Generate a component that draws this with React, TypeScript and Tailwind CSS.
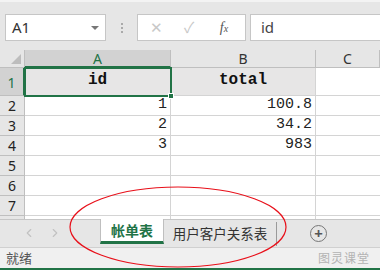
import { ChevronLeft, ChevronRight } from "lucide-react";

const cols = ["A", "B", "C"];
const rows: (string | number)[][] = [
  ["id", "total"],
  [1, "100.8"],
  [2, "34.2"],
  [3, "983"],
  ["", ""],
  ["", ""],
  ["", ""],
];

const mono = { fontFamily: '"Liberation Mono", "DejaVu Sans Mono", monospace' };
const ui = { fontFamily: '"Noto Sans", "Noto Sans CJK SC", sans-serif' };

export default function App() {
  return (
    <div className="relative w-[380px] h-[270px] overflow-hidden bg-[#e6e6e6] select-none" style={ui}>
      {/* formula bar */}
      <div className="h-[50px] flex items-start pt-[12px] border-t-2 border-[#f3f3f3]">
        <div className="ml-[5px] w-[101px] h-[27px] bg-white border border-[#c6c6c6] flex items-center justify-between pl-[6px] pr-[6px]">
          <span className="text-[15px] text-[#333]">A1</span>
          <span className="w-0 h-0 border-l-[4px] border-r-[4px] border-t-[4px] border-l-transparent border-r-transparent border-t-[#777]" />
        </div>
        <div className="w-[31px] h-[27px] flex flex-col items-center justify-center gap-[2px]">
          <span className="w-[2px] h-[2px] bg-[#aaa]" />
          <span className="w-[2px] h-[2px] bg-[#aaa]" />
          <span className="w-[2px] h-[2px] bg-[#aaa]" />
        </div>
        <div className="w-[109px] h-[27px] bg-white border border-[#c6c6c6] flex items-center">
          <span className="w-[36px] text-center text-[15px] text-[#c8c8c8]">✕</span>
          <span className="w-[30px] text-center text-[15px] text-[#c8c8c8]">✓</span>
          <span className="w-[40px] text-center text-[14px] italic text-[#555]" style={{ fontFamily: '"Liberation Serif", serif' }}>
            f<span className="text-[10px]">x</span>
          </span>
        </div>
        <div className="ml-[4px] flex-1 h-[27px] bg-white border border-[#c6c6c6] border-r-0 flex items-center pl-[10px]">
          <span className="text-[15px] text-[#444]">id</span>
        </div>
      </div>

      {/* grid */}
      <div className="grid grid-cols-[25px_146px_145px_64px] grid-rows-[18px_28px_repeat(6,20px)_10px] bg-white text-[14px]">
        <div className="bg-[#e6e6e6] border-r border-b border-[#bfbfbf] relative">
          <span
            className="absolute right-[3px] bottom-[3px] w-0 h-0"
            style={{ borderRight: "10px solid #bdbdbd", borderTop: "10px solid transparent" }}
          />
        </div>
        {cols.map((c, i) => (
          <div
            key={c}
            className={`flex items-center justify-center text-[14px] border-r border-b border-[#bfbfbf] ${
              i === 0 ? "bg-[#d2d2d2] text-[#217346] border-b-[#217346] border-b-2" : "bg-[#e6e6e6] text-[#333]"
            }`}
          >
            {c}
          </div>
        ))}
        {rows.map((r, ri) => (
          <Row key={ri} n={ri + 1} cells={r} />
        ))}
        <div className="bg-[#e6e6e6] border-r border-[#bfbfbf]" />
        <div className="border-r border-[#d4d4d4]" />
        <div className="border-r border-[#d4d4d4]" />
        <div />
      </div>

      {/* selection */}
      <div className="absolute left-[24px] top-[67px] w-[148px] h-[30px] border-2 border-[#217346] pointer-events-none">
        <span className="absolute -right-[4px] -bottom-[4px] w-[6px] h-[6px] bg-[#217346] border border-white" />
      </div>

      {/* sheet tabs */}
      <div className="absolute left-0 top-[219px] w-[380px] h-[28px] bg-[#e6e6e6] border-t border-[#c6c6c6] flex items-start">
        <div className="w-[100px] h-[26px] flex items-center gap-[12px] pl-[22px]">
          <ChevronLeft size={14} className="text-[#c2c2c2]" />
          <ChevronRight size={14} className="text-[#c2c2c2]" />
        </div>
        <div className="w-[64px] h-[25px] -mt-px bg-white border-l border-r border-[#bfbfbf] border-b-[3px] border-b-[#217346] flex items-center justify-center text-[14px] font-bold text-[#217346]">
          帐单表
        </div>
        <div className="w-[113px] h-[24px] flex items-center justify-center text-[13.5px] text-[#333] border-r border-[#9a9a9a] mt-[2px]">
          用户客户关系表
        </div>
        <div className="ml-[33px] mt-[5px] w-[17px] h-[17px] rounded-full border-[1.5px] border-[#777] flex items-center justify-center text-[#555] text-[15px] leading-none font-bold">
          +
        </div>
      </div>

      {/* status bar */}
      <div className="absolute left-0 top-[247px] w-[380px] h-[23px] bg-[#f0f0f0] border-t border-[#d0d0d0] flex items-start justify-between pl-[6px] pr-[10px]">
        <span className="text-[13px] text-[#555] mt-[1px]">就绪</span>
        <span className="text-[12px] text-[#b3b3b3] mt-[2px] tracking-[1px]">图灵课堂</span>
        <span className="absolute left-0 bottom-0 w-full h-[2px] bg-[#217346]" />
      </div>

      {/* red ellipse */}
      <svg className="absolute left-0 top-0 pointer-events-none" width="380" height="270">
        <ellipse cx="178" cy="227" rx="108" ry="40" fill="none" stroke="#e8101a" strokeWidth="1.2" />
      </svg>
    </div>
  );
}

function Row({ n, cells }: { n: number; cells: (string | number)[] }) {
  const head = n === 1;
  return (
    <>
      <div
        className={`flex justify-center text-[14px] border-r border-b border-[#bfbfbf] ${
          head ? "bg-[#d2d2d2] text-[#217346] border-r-2 border-r-[#217346] items-end pb-[2px]" : "items-center bg-[#e6e6e6] text-[#222]"
        }`}
      >
        {n}
      </div>
      {cells.map((v, i) => (
        <div
          key={i}
          className={`flex px-[3px] border-r border-b border-[#d4d4d4] ${
            head ? "items-end pb-[3px] justify-center font-bold bg-[#e7e6e6] text-[#111] text-[16px]" : "items-center justify-end text-[#222] text-[15px]"
          }`}
          style={mono}
        >
          {v}
        </div>
      ))}
      <div className="border-b border-[#d4d4d4]" />
    </>
  );
}
